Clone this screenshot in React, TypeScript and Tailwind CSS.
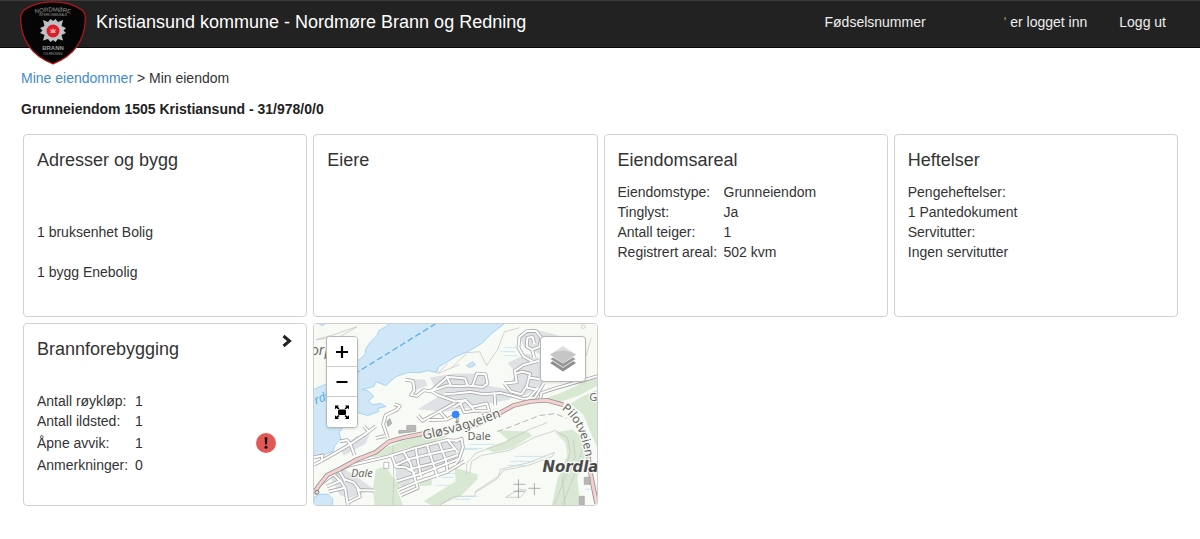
import type { ReactNode } from "react";
import clsx from "clsx";

interface Fact {
  label: string;
  value: string;
  alert?: boolean;
}

const areaFacts: Fact[] = [
  { label: "Eiendomstype:", value: "Grunneiendom" },
  { label: "Tinglyst:", value: "Ja" },
  { label: "Antall teiger:", value: "1" },
  { label: "Registrert areal:", value: "502 kvm" },
];

const fireFacts: Fact[] = [
  { label: "Antall røykløp:", value: "1" },
  { label: "Antall ildsted:", value: "1" },
  { label: "Åpne avvik:", value: "1", alert: true },
  { label: "Anmerkninger:", value: "0" },
];

const water = [
  "M390 323 L386 327 L379 331 L377 336 L370 343 L366 349 L365 355 L358 361 L345 374 L330 383 L313 390 V457 L325 455 L333 452 L335 446 L341 440 L339 433 L346 425 L349 417 L357 413 L368 416 L379 412 L378 409 L386 407 L381 404 L372 405 L369 401 L374 397 L368 391 L362 390 L374 387 L376 382 L386 386 L396 377 L408 373 L420 373 L428 371 L437 373 L439 367 L448 362 L456 357 L468 352 L482 344 L492 334 L506 323 Z",
  "M314 506 V498 L320 495 L328 495 L333 500 L332 507 Z",
  "M467 366 L473 362 L476 365 L470 368 Z",
  "M318 323 L322 326 L327 323 Z",
];

const woods = [
  "M370 458 L388 447 L412 438 L424 434 L448 437 L428 444 L402 450 L386 456 Z",
  "M376 470 L386 467 L393 478 L401 484 L398 492 L404 508 L375 508 L373 490 Z",
  "M455 468 L464 471 L478 475 L478 480 L470 488 L462 496 L436 508 L424 502 L440 492 L456 482 Z",
  "M498 431 L528 432 L533 436 L512 449 L494 453 L486 449 L509 441 Z",
  "M556 433 L573 430 L581 436 L588 445 L585 462 L578 478 L581 508 L552 508 L558 480 L568 456 L566 443 Z",
  "M571 404 L585 396 L598 390 V448 L592 435 L584 415 Z",
  "M546 399 L560 394 L578 386 L598 374 V386 L580 396 L562 402 Z",
  "M420 480 L432 480 L432 486 L420 487 Z",
];

const shading = [
  "M545 332 L560 336 V350 L540 354 L525 348 L520 336 L532 329 Z",
  "M508 363 L528 354 L545 360 V384 L526 396 L508 390 L516 374 Z",
  "M412 380 L425 380 L428 386 L415 391 Z",
  "M430 378 L455 374 L487 374 L488 386 L520 392 L510 400 L470 408 L445 412 L418 410 L440 396 Z",
  "M396 454 L440 442 L463 441 L458 462 L418 477 L402 489 L396 478 Z",
  "M330 478 L345 470 L360 480 L374 490 L350 499 L340 496 Z",
  "M340 450 L356 437 L370 434 L366 444 L344 456 Z",
];

/* Roads are drawn at three times the scale of the map */
const streets = [
  // north, towards the fjord
  "M274 168 L298 172 L302 200 L292 214 L310 217 L330 200 L355 204 L375 216 L425 234 L456 230",
  "M355 200 L402 160 L425 162 L455 165 L462 186 L508 190 L522 180 L516 152 L490 150 L478 184",
  "M355 202 L400 186 L440 188 L462 186 M400 160 L412 186",
  "M312 276 L326 292 L420 240 M345 290 L400 288 L438 268 M378 264 L398 286",
  "M395 212 L425 210 L470 205 L510 212 L560 208 L590 215 L628 226 L665 222 L690 180",
  "M423 250 L455 230 L476 250 L520 240 L527 262 L484 262 L470 247 M440 240 L452 266 L484 262 M543 210 L545 245",
  // the loops behind the layer control
  "M654 112 L630 98 L615 72 L618 40 L640 22 L668 22 L684 42 L678 70 L656 78 L640 68 L642 42 L658 40 L662 58 M656 78 L662 100",
  "M674 112 L630 124 L604 142 L610 176 L570 180 M570 176 L592 204 L624 212 L640 188 L650 150 L626 144 L608 150",
  "M648 162 L676 166 M638 192 L668 198 M672 196 L640 230",
  "M680 228 L684 208 L720 196 L852 158",
  // harbour side
  "M242 242 L258 248 L250 258 L215 276 L208 302 L222 344 M212 338 L186 344",
  "M186 308 L150 335 L100 368 L24 412 L0 424 M150 308 L164 324 M78 354 L100 350 L112 368 L122 396 M0 402 L26 396 L22 414",
  // Dale
  "M22 480 L60 452 L100 428 L220 400 L300 375 L400 350 L430 352",
  "M60 455 L82 476 L94 496 L102 548 M38 490 L80 472 M44 505 L90 494 M78 446 L92 470 M94 468 L120 478 L136 500 L180 502 M102 538 L138 520 L132 498",
  "M235 400 L246 430 L276 432 L302 448 M270 386 L290 420 L312 494 L262 516",
  "M306 374 L312 410 L322 460 M340 365 L355 410 L372 462 M376 356 L396 408 L402 444",
  "M244 426 L290 406 L350 392 L425 376 M250 474 L320 452 L432 408 M284 438 L360 420 L430 396",
  "M254 500 L310 476 L400 446 L452 414 M404 352 L430 384",
  "M428 352 L444 346 L448 372 L436 408 L424 422",
];

const mainRoads = [
  "M0 512 L12 490 L40 455 L75 438 L130 408 L186 386 L225 355 L270 342 L330 330 L420 318 L500 300 L560 268 L600 246 L650 234 L700 230 L750 244",
  "M826 400 L828 430 L836 470 L850 540",
];

const contours = [
  "M467 475 L467 464 L476 454 L505 443 L530 430 L548 423 M470 474 L472 462 L482 456 L510 451 L535 438 L556 431 L568 438 L571 452 L563 480 L566 508",
  "M436 508 L455 497 L475 497 L476 492 L499 477 L501 470 L530 463 L555 453 L553 457 L529 466 L504 471 L497 480 L476 493",
  "M316 340 L334 335 L357 327 L340 337 Z",
  "M506 498 L520 490 L527 491 L521 498 Z",
  "M451 369 L468 353 L480 352 L487 366 L498 350 L505 332 L520 328",
  "M448 364 L438 374 L460 365",
  "M393 446 L394 480 L393 507 M554 508 L565 480 L576 458 L574 440",
  "M562 508 L575 476 L583 450 M587 356 L592 338",
];

const marsh = [
  "M505 348 h12 M501 352 h15 M505 356 h13",
  "M470 445 h25 M465 449 h18 M515 457 h32 M510 462 h25 M508 466 h18",
  "M438 474 h18 M442 478 h12 M436 486 h14 M462 450 h16",
  "M582 457 h10 M582 467 h10 M586 490 h10 M455 500 h16 M466 497 h12",
];

function PropertyMap() {
  return (
    <svg
      className="block size-full"
      viewBox="314 324 283 182"
      preserveAspectRatio="xMidYMid slice"
      role="img"
      aria-label="Kart over eiendommen"
    >
      <defs>
        <path id="glosvagveien" d="M424 440 Q462 433 510 414" />
        <path id="pilotveien" d="M562 410 Q583 424 587 465" />
      </defs>
      <rect x="300" y="310" width="320" height="210" fill="#f8fbf5" />
      {woods.map((d) => (
        <path key={d} d={d} fill="#d9e8d2" />
      ))}
      {shading.map((d) => (
        <path key={d} d={d} fill="#dfe2e4" />
      ))}
      {water.map((d) => (
        <path key={d} d={d} fill="#cfe7f7" stroke="#9bcbee" strokeWidth="0.8" />
      ))}
      <g fill="none" stroke="#c6c8c5" strokeWidth="0.8">
        {contours.map((d) => (
          <path key={d} d={d} />
        ))}
      </g>
      <g stroke="#b9dcf3" strokeWidth="0.7">
        {marsh.map((d) => (
          <path key={d} d={d} />
        ))}
      </g>
      <path d="M436 324 L352 376" stroke="#62b5ec" strokeWidth="1.4" strokeDasharray="6 3" />
      <path
        d="M498 432 L512 427 L525 422 L540 416 L556 414 L567 419"
        fill="none"
        stroke="#b5b5b5"
        strokeWidth="1"
        strokeDasharray="6 3"
      />
      <g transform="translate(314 324) scale(0.3333)" fill="none" strokeLinejoin="round">
        {streets.map((d) => (
          <path key={d} d={d} stroke="#aaaaaa" strokeWidth="11" />
        ))}
        {streets.map((d) => (
          <path key={d} d={d} stroke="#fff" strokeWidth="6" strokeLinecap="square" />
        ))}
        {mainRoads.map((d) => (
          <path key={d} d={d} stroke="#9a9290" strokeWidth="14" />
        ))}
        {mainRoads.map((d) => (
          <path key={d} d={d} stroke="#f5d0d0" strokeWidth="9" />
        ))}
      </g>

      {/* Buildings */}
      <g fill="#b8b8b8" stroke="#999" strokeWidth="0.6">
        <path d="M399 431 h8 v-5 h9 v6 l-17 2 Z" />
        <path d="M387 422 l3 -3 l2 5 l-4 3 Z" />
        <path d="M585 478 h6 v7 h-6 Z M580 497 h5 v9 h-5 Z" />
        <path d="M384 463 h5 v6 h-5 Z" fill="#fff" />
      </g>
      <path
        d="M519 480 V499 M514 485 H526 M514 492 H525 M535 484 V496 M529 489 H541"
        stroke="#9a9a9a"
        strokeWidth="0.8"
      />
      <circle cx="584" cy="327" r="1.8" fill="#fff" stroke="#bbb" strokeWidth="0.7" />
      <circle cx="317" cy="493" r="2" fill="#ddd" stroke="#666" strokeWidth="0.8" />

      <g
        fontFamily="'Noto Sans', sans-serif"
        fontSize="12"
        fill="#666"
        stroke="#f8fbf5"
        strokeWidth="2.5"
        paintOrder="stroke"
      >
        <text fontSize="13">
          <textPath href="#glosvagveien">Gløsvågveien</textPath>
        </text>
        <text fontSize="12">
          <textPath href="#pilotveien">Pilotveien</textPath>
        </text>
        <text x="468" y="441" fontSize="11">Dale</text>
        <text x="351" y="478" fontSize="11" fontStyle="italic" strokeWidth="1.5">Dale</text>
        <text x="590" y="401" fontSize="11">G</text>
        <text x="311" y="355" fontSize="14" fontStyle="italic">orp</text>
        <text
          x="543"
          y="473"
          fontFamily="'DejaVu Sans', sans-serif"
          fontSize="15"
          fontWeight="700"
          fontStyle="italic"
          fill="#4a4a4a"
        >
          Nordla
        </text>
        <text
          x="316"
          y="405"
          fontStyle="italic"
          fill="#58aee6"
          stroke="none"
          transform="rotate(-22 316 405)"
        >
          rds
        </text>
      </g>
      <circle cx="456" cy="415" r="3.8" fill="#3388ff" />
      <circle cx="458" cy="420" r="1.2" fill="#fff" stroke="#666" strokeWidth="0.6" />
    </svg>
  );
}

function Logo() {
  return (
    <svg className="h-16 w-[66px]" viewBox="20 0 66 64" role="img" aria-label="Nordmøre Brann og Redning">
      <defs>
        <path id="logo-arc" d="M30 14 Q53 7 76 14" />
      </defs>
      <path
        d="M53 0.800 C65 0.800 74 3 82 9 Q85.500 12 85.300 18 C85 39 74 55 53 62.800 C32 55 21 39 20.700 18 Q20.500 12 24 9 C32 3 41 0.800 53 0.800 Z"
        fill="#050505"
        stroke="#b3161d"
        strokeWidth="1.3"
      />
      <g fontFamily="'Liberation Sans', sans-serif" textAnchor="middle" fill="#9a9a9a">
        <text fontSize="6">
          <textPath href="#logo-arc" startOffset="50%">NORDMØRE</textPath>
        </text>
        <text x="53" y="15" fontSize="3">INTERKOMMUNALE</text>
        <text x="53" y="49" fontSize="6" fontWeight="700">BRANN</text>
        <text x="53" y="54" fontSize="3">OG REDNING</text>
      </g>
      <path
        d="M48 21 L50.500 18 L53 20 L55.500 18 L58 21 L63 19 L61.500 25 L66 27 L63.500 29.500 L66 32 L61.500 34 L63 39.500 L58 38 L55.500 41 L53 39 L50.500 41 L48 38 L43 39.500 L44.500 34 L40 32 L42.500 29.500 L40 27 L44.500 25 L43 19 Z"
        fill="#bfc2c4"
      />
      <circle cx="53" cy="30" r="6.500" fill="#dc1f2b" />
      <path d="M50 28 l2 1 l1 -2 l1 2 l2 -1 l-1 3 l1 1 h-6 l1 -1 Z" fill="#f0a4a6" />
    </svg>
  );
}

function Card({ title, action, children }: { title: string; action?: ReactNode; children?: ReactNode }) {
  return (
    <section className="min-h-[183px] rounded border border-[#d2d2d2] bg-white px-[13px] pt-[15px]">
      <div className="flex items-start justify-between">
        <h2 className="text-lg leading-5">{title}</h2>
        {action}
      </div>
      {children}
    </section>
  );
}

function FactTable({ facts, labelClass }: { facts: Fact[]; labelClass: string }) {
  return (
    <table className="w-full">
      <tbody>
        {facts.map((fact) => (
          <tr key={fact.label} className={clsx(fact.alert && "h-6")}>
            <th scope="row" className={clsx("p-0 text-left font-normal whitespace-nowrap", labelClass)}>
              {fact.label}
            </th>
            <td className="p-0">
              <div className="flex items-center justify-between">
                {fact.value}
                {fact.alert && <AlertIcon />}
              </div>
            </td>
          </tr>
        ))}
      </tbody>
    </table>
  );
}

function AlertIcon() {
  return (
    <svg className="mr-[17px] size-5" viewBox="0 0 20 20" role="img" aria-label="Krever oppfølging">
      <circle cx="10" cy="10" r="10" fill="#e25856" />
      <path d="M8.600 4.300 h2.800 l-0.500 7.200 h-1.800 Z" fill="#111" />
      <circle cx="10" cy="14.300" r="1.500" fill="#111" />
    </svg>
  );
}

const mapButton = "flex h-[30px] w-full items-center justify-center bg-white text-black";

function MapCard() {
  return (
    <section className="relative h-[183px] overflow-hidden rounded border border-[#cfcfcf]">
      <PropertyMap />
      <div className="absolute top-3 left-3 w-8 divide-y divide-[#ccc] overflow-hidden rounded border border-[#b5b8b5] shadow-sm">
        <button type="button" aria-label="Zoom inn" className={mapButton}>
          <svg className="size-3" viewBox="0 0 12 12">
            <path d="M6 0 V12 M0 6 H12" stroke="currentColor" strokeWidth="2.2" />
          </svg>
        </button>
        <button type="button" aria-label="Zoom ut" className={mapButton}>
          <svg className="size-3" viewBox="0 0 12 12">
            <path d="M0.500 6 H11.500" stroke="currentColor" strokeWidth="2" />
          </svg>
        </button>
        <button type="button" aria-label="Fullskjerm" className={mapButton}>
          <svg className="size-4" viewBox="0 0 16 16" fill="currentColor">
            <rect x="4" y="5.500" width="8" height="5.500" rx="1.500" />
            <path d="M1 1.500 h4 l-1.200 1.200 l1.700 1.700 l-1.200 1.200 l-1.700 -1.700 L1 5.200 Z" />
            <path d="M15 1.500 h-4 l1.200 1.200 l-1.700 1.700 l1.200 1.200 l1.700 -1.700 L15 5.200 Z" />
            <path d="M1 15 h4 l-1.200 -1.200 l1.700 -1.700 l-1.200 -1.200 l-1.700 1.700 L1 11.300 Z" />
            <path d="M15 15 h-4 l1.200 -1.200 l-1.700 -1.700 l1.200 -1.200 l1.700 1.700 L15 11.300 Z" />
          </svg>
        </button>
      </div>
      <button
        type="button"
        aria-label="Kartlag"
        className="absolute top-3 right-[11px] flex size-[46px] items-center justify-center rounded border border-[#b5b8b5] bg-white shadow-sm"
      >
        <svg className="h-[26px] w-7" viewBox="0 0 28 26">
          <path d="M1 17 L14 25.500 L27 17 L24 15 L14 21 L4 15 Z" fill="#8e8e8e" />
          <path d="M1 13 L14 21.500 L27 13 L24 11 L14 17 L4 11 Z" fill="#999" stroke="#fff" strokeWidth="0.700" />
          <path d="M1 8.500 L14 0 L27 8.500 L14 17 Z" fill="#dedede" />
          <path d="M1 8.500 L6 6 L14 4.500 L22 6 L27 8.500 L14 17 Z" fill="#c6c6c6" />
        </svg>
      </button>
    </section>
  );
}

export default function App() {
  return (
    <div className="min-h-screen bg-white font-['Liberation_Sans',Arial,sans-serif] text-sm text-[#333]">
      <header className="relative flex h-12 items-center justify-between border-t border-b border-t-[#3a3a3a] border-b-[#080808] bg-[#222] pr-[34px] pb-1 pl-24 text-white">
        <div className="absolute top-0 left-5">
          <Logo />
        </div>
        <h1 className="text-lg leading-6">Kristiansund kommune - Nordmøre Brann og Redning</h1>
        <nav className="flex items-center text-[#eee]">
          <span className="mr-[78px]">Fødselsnummer</span>
          <span className="mr-8">
            <span className="text-[#a58a60]">'</span> er logget inn
          </span>
          <a href="#logg-ut">Logg ut</a>
        </nav>
      </header>

      <main className="pr-[22px] pl-[23px]">
        <div className="-ml-[2px] pt-5">
          <nav aria-label="Brødsmulesti" className="leading-5">
            <a href="#eiendommer" className="text-[#428bca]">
              Mine eiendommer
            </a>{" "}
            &gt; Min eiendom
          </nav>
          <p className="mt-[11px] leading-5 font-bold text-[#222]">
            Grunneiendom 1505 Kristiansund - 31/978/0/0
          </p>
        </div>

        <div className="mt-[15px] grid grid-cols-4 gap-[6px]">
          <Card title="Adresser og bygg">
            <p className="mt-[52px]">1 bruksenhet Bolig</p>
            <p className="mt-5">1 bygg Enebolig</p>
          </Card>
          <Card title="Eiere" />
          <Card title="Eiendomsareal">
            <div className="mt-3">
              <FactTable facts={areaFacts} labelClass="w-[106px]" />
            </div>
          </Card>
          <Card title="Heftelser">
            <div className="mt-3">
              <p>Pengeheftelser:</p>
              <p>1 Pantedokument</p>
              <p>Servitutter:</p>
              <p>Ingen servitutter</p>
            </div>
          </Card>
          <Card
            title="Brannforebygging"
            action={
              <button type="button" aria-label="Åpne brannforebygging" className="-mt-[5px] text-[#222]">
                <svg className="h-3.5 w-3" viewBox="0 0 12 14">
                  <path d="M2.500 2 L8.500 7 L2.500 12" fill="none" stroke="currentColor" strokeWidth="3" />
                </svg>
              </button>
            }
          >
            <div className="mt-8">
              <FactTable facts={fireFacts} labelClass="w-[98px]" />
            </div>
          </Card>
          <MapCard />
        </div>
      </main>
    </div>
  );
}
